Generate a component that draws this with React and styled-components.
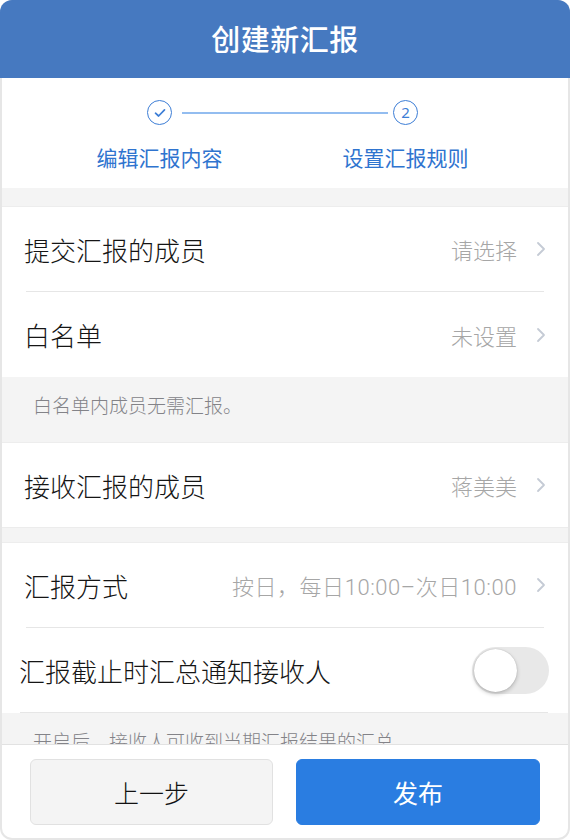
import React, { useState } from "react";
import styled, { createGlobalStyle } from "styled-components";

const Global = createGlobalStyle`
  html, body { margin: 0; padding: 0; background: #ffffff; }
  body { font-family: "Noto Sans CJK SC", "Noto Sans", sans-serif; -webkit-font-smoothing: antialiased; }
  * { box-sizing: border-box; }
`;

const Frame = styled.div`
  width: 570px;
  height: 840px;
  display: flex;
  flex-direction: column;
  background: #e6e6e6;
  padding: 0 2px 2px;
  border-radius: 12px;
  overflow: hidden;
`;

const Header = styled.header`
  flex: 0 0 78px;
  margin: 0 -2px;
  background: #4679c0;
  color: #ffffff;
  display: flex;
  align-items: center;
  justify-content: center;
  font-size: 29px;
  font-weight: 500;
  letter-spacing: 0.5px;
  padding-bottom: 2px;
`;

const Body = styled.main`
  flex: 1;
  min-height: 0;
  overflow: hidden;
  background: #f4f4f4;
  display: flex;
  flex-direction: column;
  & > * { flex-shrink: 0; }
`;

const Steps = styled.section`
  background: #ffffff;
  height: 110px;
  padding: 22px 0 0 145px;
  display: flex;
  align-items: flex-start;
`;

const StepItem = styled.div`
  width: 25px;
  display: flex;
  flex-direction: column;
  align-items: center;
  gap: 17px;
`;

const StepCircle = styled.div`
  width: 25px;
  height: 25px;
  border-radius: 50%;
  border: 1.6px solid #3d7ed6;
  color: #3d7ed6;
  display: flex;
  align-items: center;
  justify-content: center;
  font-size: 15px;
  line-height: 1;
  font-family: "Noto Sans", sans-serif;
`;

const StepLabel = styled.div`
  white-space: nowrap;
  font-size: 21px;
  line-height: 30px;
  color: #2f74cf;
`;

const StepLine = styled.div`
  width: 206px;
  height: 2px;
  margin: 11.5px 5px 0 10px;
  background: #93bdf0;
`;

const Gap = styled.div`
  height: ${(p) => p.h}px;
`;

const Card = styled.div`
  background: #ffffff;
  border-top: 1px solid #ededed;
  ${(p) => (p.bottomLine ? "border-bottom: 1px solid #ececec;" : "")}
`;

const Row = styled.div`
  height: ${(p) => p.h || 84}px;
  display: flex;
  align-items: center;
  padding: 0 ${(p) => p.pr || 22}px 0 ${(p) => p.pl || 22}px;
`;

const Label = styled.div`
  flex: 1;
  font-size: 26px;
  font-weight: 300;
  color: #151515;
  white-space: nowrap;
`;

const Value = styled.div`
  font-family: "Roboto", "Noto Sans CJK SC", sans-serif;
  font-size: 22px;
  font-weight: 300;
  letter-spacing: ${(p) => (p.wide ? "0.55px" : "0")};
  color: #a6a6a6;
  white-space: nowrap;
  margin-right: 19px;
`;

const Chevron = styled.svg`
  width: 10px;
  height: 16px;
  flex: 0 0 auto;
`;

const Divider = styled.div`
  height: 1px;
  background: #e6e6e6;
  margin: 0 ${(p) => p.mr || 24}px 0 ${(p) => p.ml || 24}px;
`;

const Note = styled.div`
  height: ${(p) => p.h || 65}px;
  padding: 15px 0 0 31px;
  font-size: 19px;
  font-weight: 300;
  line-height: 26px;
  color: #838388;
  white-space: nowrap;
`;

const Toggle = styled.button`
  width: 77px;
  height: 47px;
  border-radius: 24px;
  border: none;
  padding: 2px;
  background: ${(p) => (p.on ? "#2a7de1" : "#e8e8e8")};
  display: flex;
  justify-content: ${(p) => (p.on ? "flex-end" : "flex-start")};
  cursor: pointer;
`;

const Knob = styled.span`
  width: 43px;
  height: 43px;
  border-radius: 50%;
  background: #ffffff;
  box-shadow: 0 2px 4px rgba(0, 0, 0, 0.22), 0 0 1px rgba(0, 0, 0, 0.25);
`;

const BottomBar = styled.footer`
  flex: 0 0 94px;
  background: #ffffff;
  border-top: 1px solid #e2e2e2;
  border-radius: 0 0 10px 10px;
  display: grid;
  grid-template-columns: 243px 244px;
  gap: 23px;
  padding: 14px 0 0 28px;
  align-items: start;
`;

const Button = styled.button`
  height: 66px;
  border-radius: 6px;
  font-family: "Noto Sans CJK SC", sans-serif;
  font-size: 25px;
  font-weight: ${(p) => (p.primary ? 400 : 300)};
  cursor: pointer;
  border: 1px solid ${(p) => (p.primary ? "#2a7de1" : "#e1e1e1")};
  background: ${(p) => (p.primary ? "#2a7de1" : "#f4f4f4")};
  color: ${(p) => (p.primary ? "#ffffff" : "#111111")};
`;

const Arrow = () => (
  <Chevron viewBox="0 0 10 16">
    <path d="M2 2 L8 8 L2 14" fill="none" stroke="#c5cbd5" strokeWidth="1.8" strokeLinecap="round" strokeLinejoin="round" />
  </Chevron>
);

const CheckIcon = () => (
  <svg width="14" height="14" viewBox="0 0 14 14">
    <path d="M2.5 7.2 L5.6 10 L11.5 3.8" fill="none" stroke="#3d7ed6" strokeWidth="1.7" strokeLinecap="round" strokeLinejoin="round" />
  </svg>
);

export default function App() {
  const [on, setOn] = useState(false);
  return (
    <>
      <Global />
      <Frame>
        <Header>创建新汇报</Header>
        <Body>
          <Steps>
            <StepItem>
              <StepCircle>
                <CheckIcon />
              </StepCircle>
              <StepLabel>编辑汇报内容</StepLabel>
            </StepItem>
            <StepLine />
            <StepItem>
              <StepCircle>2</StepCircle>
              <StepLabel>设置汇报规则</StepLabel>
            </StepItem>
          </Steps>
          <Gap h={18} />
          <Card>
            <Row>
              <Label>提交汇报的成员</Label>
              <Value>请选择</Value>
              <Arrow />
            </Row>
            <Divider />
            <Row h={85}>
              <Label>白名单</Label>
              <Value>未设置</Value>
              <Arrow />
            </Row>
          </Card>
          <Note>白名单内成员无需汇报。</Note>
          <Card bottomLine>
            <Row>
              <Label>接收汇报的成员</Label>
              <Value>蒋美美</Value>
              <Arrow />
            </Row>
          </Card>
          <Gap h={14} />
          <Card>
            <Row>
              <Label>汇报方式</Label>
              <Value wide>按日，每日10:00–次日10:00</Value>
              <Arrow />
            </Row>
            <Divider />
            <Row pl={17} pr={19}>
              <Label>汇报截止时汇总通知接收人</Label>
              <Toggle on={on ? 1 : 0} onClick={() => setOn(!on)} aria-label="toggle">
                <Knob />
              </Toggle>
            </Row>
            <Divider ml={18} mr={20} />
          </Card>
          <Note>开启后，接收人可收到当期汇报结果的汇总。</Note>
        </Body>
        <BottomBar>
          <Button>上一步</Button>
          <Button primary>发布</Button>
        </BottomBar>
      </Frame>
    </>
  );
}
